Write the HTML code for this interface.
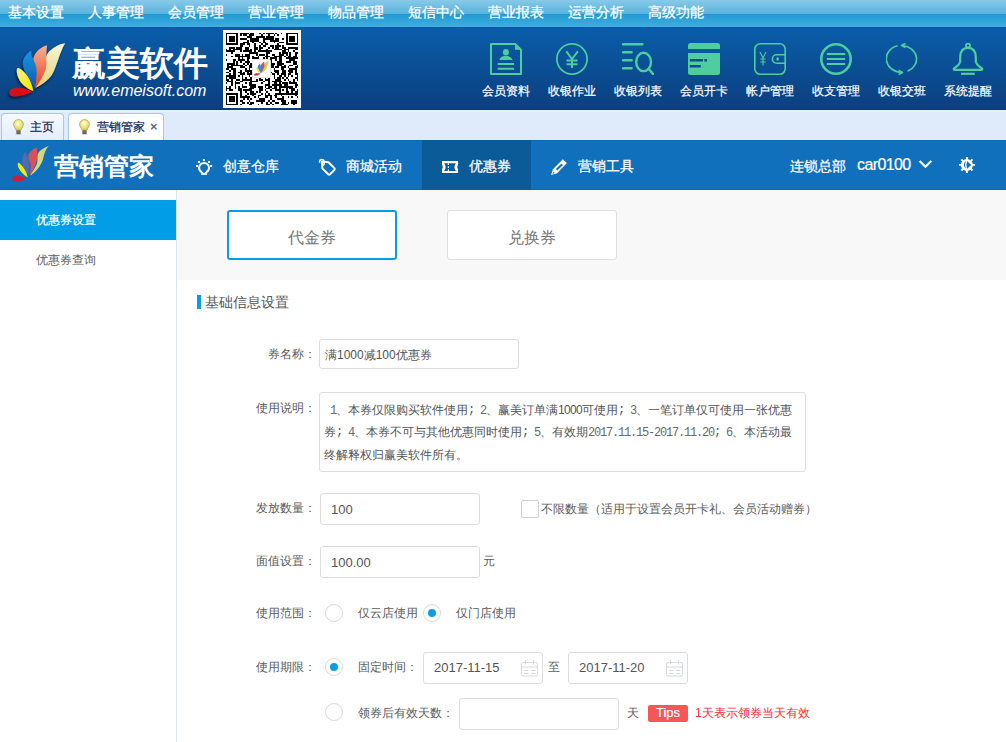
<!DOCTYPE html>
<html><head><meta charset="utf-8">
<style>
*{margin:0;padding:0;box-sizing:border-box}
html,body{width:1006px;height:742px;overflow:hidden;background:#fff;font-family:"Liberation Sans",sans-serif;}
.a{position:absolute;white-space:nowrap}
#top{position:absolute;left:0;top:0;width:1006px;height:27px;background:linear-gradient(#88c9e8 0px,#5ab3de 13.5px,#1f99d3 14px,#42aee0 27px)}
#top span{position:absolute;top:4px;font-size:14px;color:#fff;line-height:16px;-webkit-text-stroke:0.25px #fff}
#hdr{position:absolute;left:0;top:27px;width:1006px;height:83px;background:linear-gradient(#0556a5 0px,#0a5da9 2px,#0c3f7f 82px,#08306c 83px)}
.hi{position:absolute;top:16px;width:32px;height:32px}
.ht{position:absolute;top:57px;font-size:12px;color:#fff;line-height:14px;width:48px;text-align:center;-webkit-text-stroke:0.2px #fff}
#tabs{position:absolute;left:0;top:110px;width:1006px;height:30px;background:#dfeafb}
.tab{position:absolute;top:3px;height:27px;border:1px solid #aac7ec;border-bottom:none;border-radius:4px 4px 0 0;background:linear-gradient(#f7faff,#e3edfb)}
.tab span{position:absolute;top:6px;font-size:12px;color:#0e1d50;line-height:14px;-webkit-text-stroke:0.2px #0e1d50}
#nav{position:absolute;left:0;top:140px;width:1006px;height:50px;background:linear-gradient(#0c66b0 0px,#1070bb 1.5px,#1070bb 48.5px,#0b64ae 50px)}
.nt{position:absolute;top:18px;font-size:14px;color:#fff;line-height:16px;-webkit-text-stroke:0.25px #fff}
#side{position:absolute;left:0;top:190px;width:177px;height:552px;background:#fff;border-right:1px solid #dde5ea}
#gray{position:absolute;left:177px;top:190px;width:829px;height:90px;background:#f8f8f8}
.m{font-family:"Liberation Mono",monospace;font-size:12px;letter-spacing:-1.2px;white-space:pre;color:#6a6a6a}
.sc{font-family:"Liberation Mono",monospace;font-size:12px;letter-spacing:4.8px;position:relative;top:-1px}
.lbl{position:absolute;font-size:12px;color:#5c5c5c;line-height:14px}
.inp{position:absolute;border:1px solid #ddd;border-radius:3px;background:#fff}
.rad{position:absolute;width:18px;height:18px;border:1px solid #d9d9d9;border-radius:50%;background:#fff}
.rad.on::after{content:"";position:absolute;left:4px;top:4px;width:8px;height:8px;border-radius:50%;background:#0a9ee6}
</style></head><body>

<div id="top">
<span style="left:8px">基本设置</span>
<span style="left:88px">人事管理</span>
<span style="left:168px">会员管理</span>
<span style="left:248px">营业管理</span>
<span style="left:328px">物品管理</span>
<span style="left:408px">短信中心</span>
<span style="left:488px">营业报表</span>
<span style="left:568px">运营分析</span>
<span style="left:648px">高级功能</span>
</div>

<div id="hdr">
<svg style="position:absolute;left:0;top:13px" width="70" height="60" viewBox="0 40 70 60">
<defs>
<linearGradient id="lgb" x1="0" y1="0" x2="0" y2="1"><stop offset="0" stop-color="#1a94e4"/><stop offset="1" stop-color="#0b5cb0"/></linearGradient>
<linearGradient id="lgo" x1="0" y1="0" x2="0" y2="1"><stop offset="0" stop-color="#f5b596"/><stop offset="1" stop-color="#ee3a1e"/></linearGradient>
<linearGradient id="lgy" x1="0" y1="0" x2="0" y2="1"><stop offset="0" stop-color="#f8f6d6"/><stop offset="1" stop-color="#e2d478"/></linearGradient>
<linearGradient id="lgyl" x1="0" y1="0" x2="0.6" y2="1"><stop offset="0" stop-color="#f6ee9a"/><stop offset="1" stop-color="#ffe600"/></linearGradient><linearGradient id="lgr" x1="0" y1="0" x2="1" y2="0"><stop offset="0" stop-color="#c8141c"/><stop offset="1" stop-color="#ec0a10"/></linearGradient><filter id="sh" x="-30%" y="-30%" width="160%" height="160%"><feGaussianBlur in="SourceAlpha" stdDeviation="1.5"/><feOffset dx="-1" dy="2"/><feComponentTransfer><feFuncA type="linear" slope="0.6"/></feComponentTransfer><feMerge><feMergeNode/><feMergeNode in="SourceGraphic"/></feMerge></filter>
</defs>
<g filter="url(#sh)">
<path d="M65.2 43.2C58 44 50 49 46.8 55C44.5 59.5 46 64 44 70C42.5 75.5 38.5 82 35.7 87.7C42 84.5 48 80.5 51.5 75.5C55 70.5 55.5 66 57.5 61.5C59.5 56 62 48 65.2 43.2Z" fill="url(#lgy)"/>
<path d="M47 45.3C41 47 35.5 52 33.8 57C32.5 61 34.5 64.5 35.5 68C36.5 73 35.8 80 34.9 88.5C39 83 43 77 45.5 70C47.5 64 46 60 46.3 55C46.5 51 46.8 47.5 47 45.3Z" fill="url(#lgo)"/>
<path d="M31.7 50.5C26 54 22.8 58.5 22.8 63.5C22.8 68 25 72 28 77C30.5 81 33 85 34.2 88.5C36 82 37 75 36.5 69C36 63 32.5 59 31.5 55.5C31.2 53.5 31.3 51.8 31.7 50.5Z" fill="url(#lgb)"/>
<path d="M33.3 90.9C32 84 29 77 24 72C21.5 69.5 18.5 67.2 17.3 68.3C16.3 69.8 16.8 74 18.5 78C21 84 26.5 88.5 33.3 90.9Z" fill="url(#lgyl)"/>
<path d="M32.1 91.7C27 88.5 18 86.8 12.5 88.6C9 89.8 8.2 93.5 10.5 95.5C13 97.3 22 96.5 32.1 91.7Z" fill="url(#lgr)"/>
</g></svg>
<div class="a" style="left:72px;top:16px;font-size:34px;line-height:40px;color:#fff;font-weight:bold">赢美软件</div>
<div class="a" style="left:73px;top:55px;font-size:16px;line-height:18px;color:#fff;font-style:italic">www.emeisoft.com</div>
<div class="a" style="left:223px;top:3px;width:78px;height:78px;background:#fff"><svg width="78" height="78" viewBox="-1.5 -1.5 44 44" shape-rendering="crispEdges"><path d="M0 0h7v1h-7zM8 0h5v1h-5zM14 0h2v1h-2zM19 0h1v1h-1zM21 0h1v1h-1zM23 0h4v1h-4zM28 0h1v1h-1zM31 0h1v1h-1zM34 0h7v1h-7zM0 1h1v1h-1zM6 1h1v1h-1zM8 1h1v1h-1zM10 1h2v1h-2zM13 1h3v1h-3zM20 1h1v1h-1zM24 1h1v1h-1zM27 1h1v1h-1zM29 1h1v1h-1zM34 1h1v1h-1zM40 1h1v1h-1zM0 2h1v1h-1zM2 2h3v1h-3zM6 2h1v1h-1zM12 2h3v1h-3zM17 2h5v1h-5zM23 2h4v1h-4zM34 2h1v1h-1zM36 2h3v1h-3zM40 2h1v1h-1zM0 3h1v1h-1zM2 3h3v1h-3zM6 3h1v1h-1zM8 3h4v1h-4zM14 3h5v1h-5zM21 3h6v1h-6zM28 3h2v1h-2zM32 3h1v1h-1zM34 3h1v1h-1zM36 3h3v1h-3zM40 3h1v1h-1zM0 4h1v1h-1zM2 4h3v1h-3zM6 4h1v1h-1zM12 4h1v1h-1zM14 4h5v1h-5zM21 4h1v1h-1zM25 4h5v1h-5zM34 4h1v1h-1zM36 4h3v1h-3zM40 4h1v1h-1zM0 5h1v1h-1zM6 5h1v1h-1zM10 5h3v1h-3zM15 5h1v1h-1zM19 5h1v1h-1zM21 5h2v1h-2zM27 5h1v1h-1zM30 5h3v1h-3zM34 5h1v1h-1zM40 5h1v1h-1zM0 6h7v1h-7zM8 6h3v1h-3zM12 6h2v1h-2zM16 6h1v1h-1zM20 6h1v1h-1zM22 6h2v1h-2zM29 6h1v1h-1zM34 6h7v1h-7zM8 7h2v1h-2zM13 7h1v1h-1zM16 7h1v1h-1zM19 7h1v1h-1zM21 7h2v1h-2zM25 7h2v1h-2zM28 7h3v1h-3zM32 7h1v1h-1zM2 8h3v1h-3zM6 8h3v1h-3zM11 8h2v1h-2zM16 8h2v1h-2zM19 8h2v1h-2zM24 8h1v1h-1zM26 8h1v1h-1zM28 8h2v1h-2zM32 8h2v1h-2zM35 8h6v1h-6zM0 9h1v1h-1zM2 9h1v1h-1zM4 9h5v1h-5zM11 9h2v1h-2zM14 9h1v1h-1zM16 9h2v1h-2zM19 9h1v1h-1zM23 9h1v1h-1zM27 9h5v1h-5zM33 9h3v1h-3zM39 9h2v1h-2zM0 10h5v1h-5zM8 10h1v1h-1zM10 10h5v1h-5zM16 10h1v1h-1zM18 10h8v1h-8zM32 10h2v1h-2zM35 10h1v1h-1zM38 10h1v1h-1zM3 11h1v1h-1zM13 11h5v1h-5zM23 11h2v1h-2zM30 11h1v1h-1zM32 11h3v1h-3zM36 11h1v1h-1zM39 11h2v1h-2zM0 12h1v1h-1zM5 12h3v1h-3zM9 12h1v1h-1zM11 12h3v1h-3zM17 12h1v1h-1zM19 12h3v1h-3zM23 12h1v1h-1zM26 12h2v1h-2zM30 12h3v1h-3zM34 12h1v1h-1zM36 12h1v1h-1zM39 12h1v1h-1zM3 13h1v1h-1zM5 13h9v1h-9zM15 13h1v1h-1zM18 13h1v1h-1zM22 13h3v1h-3zM27 13h5v1h-5zM33 13h1v1h-1zM35 13h2v1h-2zM38 13h2v1h-2zM7 14h1v1h-1zM9 14h1v1h-1zM12 14h2v1h-2zM15 14h4v1h-4zM21 14h1v1h-1zM23 14h1v1h-1zM25 14h4v1h-4zM30 14h2v1h-2zM34 14h7v1h-7zM0 15h1v1h-1zM4 15h2v1h-2zM7 15h4v1h-4zM12 15h1v1h-1zM16 15h5v1h-5zM24 15h2v1h-2zM28 15h1v1h-1zM30 15h2v1h-2zM36 15h3v1h-3zM4 16h1v1h-1zM6 16h1v1h-1zM8 16h1v1h-1zM11 16h3v1h-3zM25 16h1v1h-1zM29 16h3v1h-3zM34 16h3v1h-3zM38 16h2v1h-2zM1 17h4v1h-4zM6 17h1v1h-1zM10 17h1v1h-1zM12 17h1v1h-1zM14 17h2v1h-2zM25 17h3v1h-3zM29 17h4v1h-4zM38 17h2v1h-2zM1 18h1v1h-1zM3 18h7v1h-7zM11 18h1v1h-1zM13 18h2v1h-2zM25 18h2v1h-2zM29 18h3v1h-3zM33 18h1v1h-1zM36 18h2v1h-2zM40 18h1v1h-1zM1 19h3v1h-3zM8 19h3v1h-3zM13 19h3v1h-3zM25 19h2v1h-2zM28 19h2v1h-2zM31 19h3v1h-3zM35 19h1v1h-1zM39 19h2v1h-2zM0 20h2v1h-2zM3 20h3v1h-3zM11 20h1v1h-1zM13 20h1v1h-1zM15 20h1v1h-1zM27 20h1v1h-1zM31 20h2v1h-2zM36 20h4v1h-4zM2 21h1v1h-1zM4 21h2v1h-2zM8 21h1v1h-1zM11 21h5v1h-5zM27 21h3v1h-3zM32 21h2v1h-2zM35 21h3v1h-3zM39 21h1v1h-1zM0 22h2v1h-2zM4 22h2v1h-2zM7 22h2v1h-2zM10 22h1v1h-1zM12 22h1v1h-1zM14 22h2v1h-2zM25 22h1v1h-1zM28 22h2v1h-2zM32 22h2v1h-2zM36 22h2v1h-2zM39 22h1v1h-1zM2 23h1v1h-1zM4 23h2v1h-2zM8 23h3v1h-3zM12 23h3v1h-3zM26 23h2v1h-2zM29 23h1v1h-1zM31 23h3v1h-3zM35 23h2v1h-2zM39 23h2v1h-2zM0 24h6v1h-6zM7 24h1v1h-1zM9 24h1v1h-1zM13 24h1v1h-1zM15 24h1v1h-1zM27 24h1v1h-1zM30 24h2v1h-2zM33 24h1v1h-1zM35 24h1v1h-1zM37 24h1v1h-1zM40 24h1v1h-1zM0 25h1v1h-1zM2 25h4v1h-4zM9 25h1v1h-1zM11 25h1v1h-1zM14 25h1v1h-1zM19 25h1v1h-1zM22 25h1v1h-1zM24 25h1v1h-1zM27 25h1v1h-1zM29 25h2v1h-2zM32 25h1v1h-1zM34 25h1v1h-1zM39 25h2v1h-2zM0 26h2v1h-2zM3 26h1v1h-1zM6 26h2v1h-2zM9 26h6v1h-6zM17 26h1v1h-1zM19 26h2v1h-2zM22 26h3v1h-3zM28 26h3v1h-3zM33 26h1v1h-1zM35 26h1v1h-1zM38 26h1v1h-1zM40 26h1v1h-1zM1 27h3v1h-3zM5 27h1v1h-1zM8 27h2v1h-2zM14 27h4v1h-4zM21 27h1v1h-1zM24 27h1v1h-1zM26 27h6v1h-6zM36 27h1v1h-1zM38 27h1v1h-1zM0 28h1v1h-1zM3 28h1v1h-1zM5 28h3v1h-3zM11 28h1v1h-1zM13 28h2v1h-2zM20 28h1v1h-1zM24 28h1v1h-1zM27 28h2v1h-2zM30 28h1v1h-1zM32 28h3v1h-3zM36 28h4v1h-4zM3 29h1v1h-1zM5 29h1v1h-1zM9 29h1v1h-1zM13 29h4v1h-4zM22 29h3v1h-3zM26 29h6v1h-6zM33 29h2v1h-2zM39 29h2v1h-2zM0 30h1v1h-1zM2 30h1v1h-1zM5 30h1v1h-1zM7 30h1v1h-1zM9 30h3v1h-3zM14 30h3v1h-3zM18 30h3v1h-3zM22 30h1v1h-1zM24 30h2v1h-2zM27 30h2v1h-2zM30 30h8v1h-8zM39 30h1v1h-1zM0 31h3v1h-3zM5 31h1v1h-1zM7 31h2v1h-2zM13 31h3v1h-3zM19 31h2v1h-2zM23 31h2v1h-2zM26 31h3v1h-3zM30 31h1v1h-1zM34 31h1v1h-1zM36 31h3v1h-3zM0 32h1v1h-1zM2 32h2v1h-2zM7 32h2v1h-2zM10 32h5v1h-5zM19 32h2v1h-2zM22 32h1v1h-1zM25 32h1v1h-1zM28 32h3v1h-3zM32 32h1v1h-1zM34 32h1v1h-1zM37 32h2v1h-2zM40 32h1v1h-1zM8 33h1v1h-1zM11 33h1v1h-1zM14 33h2v1h-2zM17 33h1v1h-1zM19 33h1v1h-1zM23 33h1v1h-1zM30 33h1v1h-1zM34 33h2v1h-2zM37 33h1v1h-1zM39 33h2v1h-2zM0 34h7v1h-7zM8 34h1v1h-1zM12 34h1v1h-1zM14 34h3v1h-3zM20 34h1v1h-1zM22 34h1v1h-1zM24 34h1v1h-1zM28 34h13v1h-13zM0 35h1v1h-1zM6 35h1v1h-1zM8 35h1v1h-1zM11 35h1v1h-1zM15 35h1v1h-1zM18 35h2v1h-2zM22 35h4v1h-4zM27 35h2v1h-2zM31 35h1v1h-1zM39 35h1v1h-1zM0 36h1v1h-1zM2 36h3v1h-3zM6 36h1v1h-1zM8 36h6v1h-6zM16 36h1v1h-1zM18 36h1v1h-1zM22 36h2v1h-2zM25 36h1v1h-1zM28 36h1v1h-1zM32 36h1v1h-1zM35 36h1v1h-1zM37 36h1v1h-1zM40 36h1v1h-1zM0 37h1v1h-1zM2 37h3v1h-3zM6 37h1v1h-1zM10 37h1v1h-1zM12 37h1v1h-1zM14 37h1v1h-1zM19 37h3v1h-3zM25 37h1v1h-1zM29 37h4v1h-4zM0 38h1v1h-1zM2 38h3v1h-3zM6 38h1v1h-1zM8 38h2v1h-2zM13 38h1v1h-1zM17 38h5v1h-5zM24 38h1v1h-1zM26 38h2v1h-2zM31 38h3v1h-3zM37 38h3v1h-3zM0 39h1v1h-1zM6 39h1v1h-1zM9 39h2v1h-2zM12 39h1v1h-1zM14 39h2v1h-2zM20 39h1v1h-1zM23 39h1v1h-1zM25 39h1v1h-1zM28 39h2v1h-2zM32 39h2v1h-2zM35 39h1v1h-1zM37 39h3v1h-3zM0 40h7v1h-7zM8 40h1v1h-1zM13 40h2v1h-2zM18 40h1v1h-1zM23 40h2v1h-2zM26 40h1v1h-1zM31 40h4v1h-4zM38 40h1v1h-1z" fill="#000"/></svg><div class="a" style="left:29px;top:29px;width:19px;height:19px;background:#fff;border:1px solid #e2e2e2;border-radius:2px"></div><svg class="a" style="left:30px;top:30px" width="17" height="17" viewBox="6 40 62 60"><path d="M65 43C55 46 48 52 45 60C40 70 37 80 36 87C44 83 52 76 56 66C59 58 62 50 65 43Z" fill="#b8d84a"/><path d="M47 45C40 48 35 55 34 63C33 72 33 80 34 88C40 80 45 72 47 62C48 55 47.5 49 47 45Z" fill="#e0407a"/><path d="M32 50.5C24 57 21 66 24 74C26 80 30 85 33.5 88.5C35 80 36 72 35 64C34 58 32 54 32 50.5Z" fill="#2a8ee0"/><path d="M33.5 90.5C27 84 19 76 17.5 70.5C17.5 66.5 21.5 67 25 70C30 76 33 84 33.5 90.5Z" fill="#f5e020"/><path d="M32.5 89C24 86 12 87 9 92.5C10 97.5 23 97 32.5 89Z" fill="#d8203a"/></svg></div>
<svg class="hi" style="left:490px" viewBox="0 0 32 32"><path d="M1 1H25.2L31 6.8V31H1Z" fill="none" stroke="#4ecd9e" stroke-width="2" stroke-linejoin="round"/><path d="M25 1.5V6.8H30.6Z" fill="#4ecd9e"/><ellipse cx="15.9" cy="9.3" rx="3" ry="3.3" fill="#4ecd9e"/><path d="M9.4 17Q10.3 13.8 14.2 13.1H17.6Q21.6 13.8 22.7 17Z" fill="#4ecd9e"/><path d="M7.7 20.9H24.1M7.7 25.8H24.1" stroke="#4ecd9e" stroke-width="2"/></svg><div class="ht" style="left:482px">会员资料</div><svg class="hi" style="left:556px" viewBox="0 0 32 32"><circle cx="16" cy="16" r="15.1" fill="none" stroke="#4ecd9e" stroke-width="1.7"/><path d="M10.3 8.3L16 16L21.9 8.3M16 16V25M10.5 17.4H21.5M10.5 21.2H21.5" fill="none" stroke="#4ecd9e" stroke-width="2"/></svg><div class="ht" style="left:548px">收银作业</div><svg class="hi" style="left:622px" viewBox="0 0 32 32"><path d="M1.2 1.3H20.3M1.2 9.2H9.6M1.2 17.2H9.6M1.2 25.3H9.6" stroke="#4ecd9e" stroke-width="2.6" stroke-linecap="round"/><ellipse cx="21.6" cy="18.9" rx="7.4" ry="9.2" fill="none" stroke="#4ecd9e" stroke-width="2.4"/><path d="M26.6 25.8L31.2 31.2" stroke="#4ecd9e" stroke-width="2.4" stroke-linecap="round"/></svg><div class="ht" style="left:614px">收银列表</div><svg class="hi" style="left:688px" viewBox="0 0 32 32"><path d="M0 2.5Q0 0 2.5 0H29.5Q32 0 32 2.5V6H0Z" fill="#4ecd9e"/><path d="M0 10H32V29.5Q32 32 29.5 32H2.5Q0 32 0 29.5Z" fill="#4ecd9e"/><path d="M1.8 17.3H15M16.4 17.3H19M1.8 23.2H12.8" stroke="#0b4a91" stroke-width="2.5"/></svg><div class="ht" style="left:680px">会员开卡</div><svg class="hi" style="left:754px" viewBox="0 0 32 32"><rect x="0.8" y="0.8" width="30.4" height="30.4" rx="5.5" fill="none" stroke="#4ecd9e" stroke-width="1.6"/><path d="M31.2 11.8H22.6A4.2 4.2 0 0 0 22.6 20.2H31.2" fill="none" stroke="#4ecd9e" stroke-width="1.6"/><ellipse cx="23.6" cy="16" rx="1.3" ry="1.8" fill="#4ecd9e"/><path d="M6 9L9 15L12 9M9 15V22.5M6.3 16H11.7M6.3 19H11.7" fill="none" stroke="#4ecd9e" stroke-width="1.1"/></svg><div class="ht" style="left:746px">帐户管理</div><svg class="hi" style="left:820px" viewBox="0 0 32 32"><circle cx="16" cy="16" r="14.7" fill="none" stroke="#4ecd9e" stroke-width="2.6"/><path d="M6.8 11H25.2M6.8 16H25.2M6.8 21H25.2" stroke="#4ecd9e" stroke-width="2.2"/></svg><div class="ht" style="left:812px">收支管理</div><svg class="hi" style="left:886px" viewBox="0 0 32 32"><path d="M11.5 2.8A15.8 13.6 0 0 0 16.5 29.4" fill="none" stroke="#4ecd9e" stroke-width="1.7"/><path d="M16 2.5A15.8 13.6 0 0 1 21.6 28.3" fill="none" stroke="#4ecd9e" stroke-width="1.7"/><path d="M19.5 0.3L15.6 2.6L19.5 4.6M12.5 27.3L16.4 29.4L12.6 31.4" fill="none" stroke="#4ecd9e" stroke-width="1.7" stroke-linejoin="round"/></svg><div class="ht" style="left:878px">收银交班</div><svg class="hi" style="left:952px" viewBox="0 0 32 32"><circle cx="16" cy="2.6" r="2.1" fill="none" stroke="#4ecd9e" stroke-width="1.8"/><path d="M16 4.8C10.5 4.8 8.2 9 8.2 14V18C8.2 21 5 23.5 2.2 25.2Q0.9 26.8 3 26.8H29Q31.1 26.8 29.8 25.2C27 23.5 23.8 21 23.8 18V14C23.8 9 21.5 4.8 16 4.8Z" fill="none" stroke="#4ecd9e" stroke-width="2.2" stroke-linejoin="round"/><path d="M9 30.8H22.7" stroke="#4ecd9e" stroke-width="2.2"/></svg><div class="ht" style="left:944px">系统提醒</div>
</div>

<div id="tabs">
<div style="position:absolute;left:0;top:0;width:1006px;height:2px;background:#e6eefc"></div>
<div class="tab" style="left:1px;width:63px"><svg class="a" style="left:11px;top:5px" width="11" height="16" viewBox="0 0 11 16"><defs><radialGradient id="bg1" cx="0.45" cy="0.35" r="0.6"><stop offset="0" stop-color="#ffffe0"/><stop offset="0.5" stop-color="#eeee88"/><stop offset="1" stop-color="#d8d060"/></radialGradient></defs><path d="M5.5 0.6C2.6 0.6 0.6 2.8 0.6 5.3C0.6 7.6 2.4 8.8 3 11.2H8C8.6 8.8 10.4 7.6 10.4 5.3C10.4 2.8 8.4 0.6 5.5 0.6Z" fill="url(#bg1)" stroke="#c8a468" stroke-width="0.9"/><rect x="3.3" y="11.2" width="4.4" height="3.8" rx="0.8" fill="#6a6a6a"/><ellipse cx="5.5" cy="15.3" rx="3.5" ry="0.7" fill="#000" opacity="0.15"/></svg><span style="left:28px">主页</span></div>
<div class="tab" style="left:68px;width:96px;background:#fff"><svg class="a" style="left:10px;top:5px" width="11" height="16" viewBox="0 0 11 16"><defs><radialGradient id="bg2" cx="0.45" cy="0.35" r="0.6"><stop offset="0" stop-color="#ffffe0"/><stop offset="0.5" stop-color="#eeee88"/><stop offset="1" stop-color="#d8d060"/></radialGradient></defs><path d="M5.5 0.6C2.6 0.6 0.6 2.8 0.6 5.3C0.6 7.6 2.4 8.8 3 11.2H8C8.6 8.8 10.4 7.6 10.4 5.3C10.4 2.8 8.4 0.6 5.5 0.6Z" fill="url(#bg2)" stroke="#c8a468" stroke-width="0.9"/><rect x="3.3" y="11.2" width="4.4" height="3.8" rx="0.8" fill="#6a6a6a"/><ellipse cx="5.5" cy="15.3" rx="3.5" ry="0.7" fill="#000" opacity="0.15"/></svg><span style="left:28px">营销管家</span><span style="left:81px;top:6px;font-size:13px;color:#556b85">×</span></div>
</div>

<div id="nav">
<svg class="a" style="left:0;top:0" width="60" height="50" viewBox="0 140 60 50">
<path d="M48.8 146C44 147.5 38.5 151 37.6 155C37 158.5 38.3 162 36 166C34 169.5 31.5 173 30 175.7C35 172.5 39.5 167.5 41.8 162.5C43.4 159 43.6 155.5 45 152C46 149.5 47.4 147.4 48.8 146Z" fill="#d3d77e"/>
<path d="M36.6 147.6C32.4 149.8 28.6 153 28.3 156.5C28.1 160 31 163 30.8 167C30.6 170 30 173 29.6 175.4C33.2 170.5 36.6 164 37.2 157C37.5 153 37 149.8 36.6 147.6Z" fill="#da5058"/>
<path d="M25.2 151.5C22.5 155 21.4 160 22.1 164C22.9 169 25.8 172 28.6 174.6C29.6 170 29.7 165 28.7 160.5C27.9 156.5 26 153.6 25.2 151.5Z" fill="#4e6cb0"/>
<path d="M27.8 177.6C26.8 172 23.6 167 19.6 163.2C18.2 162 17.4 163.8 17.8 165.6C18.8 170 22.8 174.6 27.8 177.6Z" fill="#f4ea10"/>
<path d="M26 178.4C22 175.6 16.5 175.2 13.6 176.4C11.9 177.3 11.8 180.4 13.8 181.3C16.8 182.4 22 181.3 26 178.4Z" fill="#cc1e36"/>
</svg>
<div class="a" style="left:54px;top:12px;font-size:25px;line-height:28px;color:#fff;font-weight:bold">营销管家</div>
<svg class="a" style="left:190px;top:12px" width="50" height="28" viewBox="0 0 50 28"><path d="M12.9 7H14.9V9H12.9ZM7.9 8.9H9.9V10.9H7.9ZM18 8.9H20V10.9H18ZM6 12.9H8V14.9H6ZM20.1 12.9H22.1V14.9H20.1Z" fill="#fff"/><path d="M11.9 20.2C10.3 19.4 9.1 17.8 9.1 15.9C9.1 13.2 11.3 11.1 14.05 11.1C16.8 11.1 19 13.2 19 15.9C19 17.8 17.8 19.4 16.2 20.2" fill="none" stroke="#fff" stroke-width="2"/><path d="M11.2 19.9H16.9V22.9H11.2Z" fill="#fff"/><path d="M13.05 19.3H15.05V20.8H13.05Z" fill="#1070bb"/></svg>
<div class="nt" style="left:223px">创意仓库</div>
<svg class="a" style="left:312px;top:12px" width="30" height="28" viewBox="0 0 30 28"><path d="M10 9.6L16.5 10.2L22.4 16.1Q23.2 17 22.4 17.9L18 22.3Q17.1 23.1 16.2 22.3L10.3 16.4Z" fill="none" stroke="#fff" stroke-width="2" stroke-linejoin="round"/><path d="M7.6 10.8V9.6Q7.6 7.4 9.8 7.4Q11.8 7.4 12.2 9.2V11.6Q12 13.2 10.8 13.2" fill="none" stroke="#fff" stroke-width="1.5"/></svg>
<div class="nt" style="left:346px">商城活动</div>
<div class="a" style="left:422px;top:0;width:109px;height:50px;background:#0b5b98"></div>
<svg class="a" style="left:435px;top:12px" width="30" height="28" viewBox="0 0 30 28"><path d="M7 9H23.1V12.6Q21.4 15 23.1 17.4V20.9H7V17.4Q8.7 15 7 12.6Z" fill="#fff"/><path d="M9.2 11.2H20.9Q18 15.05 20.9 18.9H9.2Q12.1 15.05 9.2 11.2Z" fill="#0b5b98"/><path d="M13.4 11.2V18.9" stroke="#fff" stroke-width="1.2" stroke-dasharray="1.8 1.2"/></svg>
<div class="nt" style="left:469px">优惠券</div>
<svg class="a" style="left:545px;top:12px" width="30" height="28" viewBox="0 0 30 28"><path d="M6 23L8 17.2L17.8 7.2L21.9 11.1L12.1 21.3Z" fill="#fff"/><path d="M10.9 17.1L16.5 11.5L17.9 12.9L12.3 18.5Z" fill="#0f6fba"/><path d="M8.4 19.8L7.5 22L9.7 21.1Z" fill="#0f6fba"/></svg>
<div class="nt" style="left:578px">营销工具</div>
<div class="nt" style="left:790px">连锁总部</div>
<div class="a" style="left:857px;top:16px;font-size:16px;line-height:18px;color:#fff;letter-spacing:-0.6px;-webkit-text-stroke:0.2px #fff">car0100</div>
<svg class="a" style="left:910px;top:12px" width="75" height="28" viewBox="0 0 75 28"><path d="M9.6 8.9L15.45 14.8L21.3 8.9" fill="none" stroke="#fff" stroke-width="2.1"/><g transform="translate(56.9 12.9)"><circle r="6" fill="#fff"/><path d="M0-8V-5M0 8V5M-8 0H-5M8 0H5M-5.6-5.6L-3.6-3.6M5.6 5.6L3.6 3.6M-5.6 5.6L-3.6 3.6M5.6-5.6L3.6-3.6" stroke="#fff" stroke-width="1.9"/><path d="M-1.1-3.9Q-5 0-1.1 3.9Q-2.6 0-1.1-3.9Z" fill="#1070bb"/><path d="M0.2-3.8L4.4 0.1L0.2 3.8Q-1.1 0 0.2-3.8Z" fill="#1070bb"/></g></svg>
</div>

<div id="side">
<div class="a" style="left:0;top:10px;width:176px;height:40px;background:#019de6"></div>
<div class="lbl" style="left:36px;top:23px;color:#fff;-webkit-text-stroke:0.2px #fff">优惠券设置</div>
<div class="lbl" style="left:36px;top:63px">优惠券查询</div>
</div>
<div id="gray">
<div class="a" style="left:50px;top:20px;width:170px;height:50px;border:2px solid #0a9be2;border-radius:3px;background:#fff;font-size:16px;line-height:52px;text-align:center;color:#777">代金券</div>
<div class="a" style="left:270px;top:20px;width:170px;height:50px;border:1px solid #dedede;border-radius:3px;background:#fff;font-size:16px;line-height:54px;text-align:center;color:#777">兑换券</div>
</div>
<div class="a" style="left:197px;top:295px;width:4px;height:14px;background:#0a9be2"></div>
<div class="a" style="left:205px;top:294px;font-size:14px;line-height:16px;color:#555">基础信息设置</div>

<div class="lbl" style="left:268px;top:347px">券名称：</div>
<div class="inp" style="left:319px;top:339px;width:200px;height:30px"><span class="a" style="left:5px;top:8px;font-size:12px;line-height:14px;color:#555">满1000减100优惠券</span></div>

<div class="lbl" style="left:256px;top:401px">使用说明：</div>
<div class="inp" style="left:319px;top:392px;width:487px;height:80px">
<div class="a" style="left:4px;top:10px;font-size:12px;line-height:14px;color:#555"><span class="m"> 1</span>、本券仅限购买软件使用<span class="sc">;</span><span class="m">2</span>、赢美订单满<span style="letter-spacing:-0.67px">1000</span>可使用<span class="sc">;</span><span class="m">3</span>、一笔订单仅可使用一张优惠</div>
<div class="a" style="left:4px;top:32px;font-size:12px;line-height:14px;color:#555">券<span class="sc">;</span><span class="m">4</span>、本券不可与其他优惠同时使用<span class="sc">;</span><span class="m">5</span>、有效期<span class="m">2017.11.15-2017.11.20</span><span class="sc">;</span><span class="m">6</span>、本活动最</div>
<div class="a" style="left:4px;top:55px;font-size:12px;line-height:14px;color:#555">终解释权归赢美软件所有。</div>
</div>

<div class="lbl" style="left:256px;top:501px">发放数量：</div>
<div class="inp" style="left:320px;top:493px;width:160px;height:32px"><span class="a" style="left:10px;top:9px;font-size:13px;line-height:14px;color:#555">100</span></div>
<div class="a" style="left:521px;top:500px;width:18px;height:18px;border:1px solid #d0d0d0;border-radius:2px;background:#fff"></div>
<div class="lbl" style="left:541px;top:502px">不限数量（适用于设置会员开卡礼、会员活动赠券）</div>

<div class="lbl" style="left:256px;top:554px">面值设置：</div>
<div class="inp" style="left:320px;top:546px;width:160px;height:32px"><span class="a" style="left:10px;top:9px;font-size:13px;line-height:14px;color:#555">100.00</span></div>
<div class="lbl" style="left:483px;top:554px">元</div>

<div class="lbl" style="left:256px;top:606px">使用范围：</div>
<div class="rad" style="left:325px;top:604px"></div>
<div class="lbl" style="left:358px;top:606px">仅云店使用</div>
<div class="rad on" style="left:423px;top:604px"></div>
<div class="lbl" style="left:456px;top:606px">仅门店使用</div>

<div class="lbl" style="left:256px;top:660px">使用期限：</div>
<div class="rad on" style="left:325px;top:658px"></div>
<div class="lbl" style="left:358px;top:660px">固定时间：</div>
<div class="inp" style="left:423px;top:652px;width:120px;height:32px"><span class="a" style="left:10px;top:8px;font-size:13px;line-height:14px;color:#555">2017-11-15</span><svg class="a" style="left:97px;top:7px" width="18" height="18" viewBox="0 0 18 18"><rect x="0.5" y="2.5" width="16" height="13.5" rx="1.5" fill="none" stroke="#d5dade" stroke-width="1"/><path d="M0.5 7H16.5M4.5 0V4.5M12.5 0V4.5M3 10.5H7.5M10 10.5H14.5M3 13.5H7.5M10 13.5H14.5" stroke="#d5dade" stroke-width="1"/></svg></div>
<div class="lbl" style="left:548px;top:660px">至</div>
<div class="inp" style="left:568px;top:652px;width:120px;height:32px"><span class="a" style="left:10px;top:8px;font-size:13px;line-height:14px;color:#555">2017-11-20</span><svg class="a" style="left:97px;top:7px" width="18" height="18" viewBox="0 0 18 18"><rect x="0.5" y="2.5" width="16" height="13.5" rx="1.5" fill="none" stroke="#d5dade" stroke-width="1"/><path d="M0.5 7H16.5M4.5 0V4.5M12.5 0V4.5M3 10.5H7.5M10 10.5H14.5M3 13.5H7.5M10 13.5H14.5" stroke="#d5dade" stroke-width="1"/></svg></div>

<div class="rad" style="left:325px;top:703px"></div>
<div class="lbl" style="left:358px;top:706px">领券后有效天数：</div>
<div class="inp" style="left:459px;top:698px;width:160px;height:32px"></div>
<div class="lbl" style="left:627px;top:706px">天</div>
<div class="a" style="left:648px;top:705px;width:40px;height:17px;background:#f65656;border-radius:2px;color:#fff;font-size:13px;line-height:16px;text-align:center;-webkit-text-stroke:0.2px #fff">Tips</div>
<div class="lbl" style="left:695px;top:706px;color:#fa2c2c">1天表示领券当天有效</div>

</body></html>
